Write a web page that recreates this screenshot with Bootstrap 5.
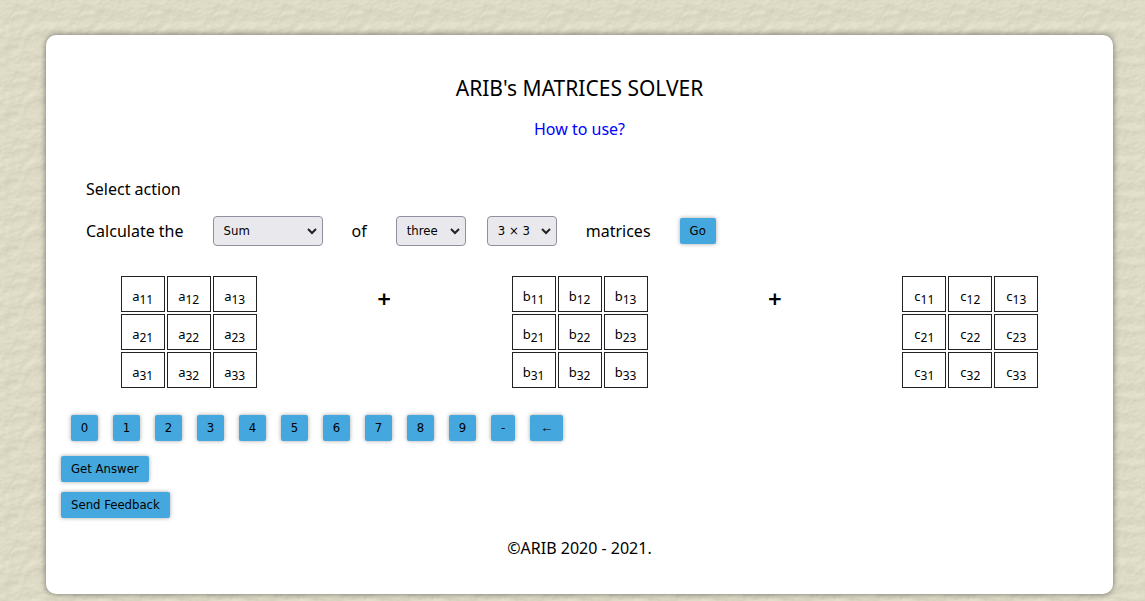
<!DOCTYPE html>
<html lang="en">
<head>
<meta charset="utf-8">
<meta name="viewport" content="width=device-width, initial-scale=1">
<title>ARIB's MATRICES SOLVER</title>
<link href="https://cdn.jsdelivr.net/npm/bootstrap@5.3.0/dist/css/bootstrap.min.css" rel="stylesheet">
<style>
  body {
    color: #000;
    font: 16px/24px "Noto Sans", sans-serif;
    padding: 35px 32px 7px 46px;
    background: #dddac6 url("data:image/svg+xml,%3Csvg xmlns='http://www.w3.org/2000/svg' width='67' height='67'%3E%3Cfilter id='p' x='0' y='0' width='100%25' height='100%25' color-interpolation-filters='sRGB'%3E%3CfeTurbulence type='fractalNoise' baseFrequency='.06 .075' numOctaves='5' seed='8' stitchTiles='stitch'/%3E%3CfeDiffuseLighting surfaceScale='.5' diffuseConstant='1.12' lighting-color='%23dfdcc7'%3E%3CfeDistantLight azimuth='235' elevation='62'/%3E%3C/feDiffuseLighting%3E%3C/filter%3E%3Crect width='67' height='67' filter='url(%23p)'/%3E%3C/svg%3E");
  }
  .panel { background: #fff; border-radius: 10px; box-shadow: 0 0 6px rgba(0,0,0,.5); padding: 40px 15px 34px; }
  h1 { font-size: 21px; line-height: 26px; font-weight: 400; }
  .help { color: #00f; }
  .step { margin: 36px 25px 15px; }
  .picker { height: 30px; padding: 0 8px 0 10px; border: 1px solid #8f8f9d; border-radius: 4px; background: #e9e9ed; color: #000; width: 70px; appearance: none;
    background-image: url("data:image/svg+xml,%3Csvg xmlns='http://www.w3.org/2000/svg' width='10' height='8'%3E%3Cpath d='M1 2l4 4 4-4' fill='none' stroke='%23222' stroke-width='2'/%3E%3C/svg%3E"); background-repeat: no-repeat; background-position: right 5px center; }
  .picker-wide { width: 110px; }
  .picker, .tap { font: 13px/16px "DejaVu Sans Condensed", "DejaVu Sans", sans-serif; }
  .tap { color: #000; background: #44a8de; border: 0; border-radius: 2px; padding: 5px 10px; box-shadow: 0 0 4px rgba(0,0,0,.35); }
  .tap-digit { width: 27px; padding: 5px 0; }
  .tap-arrow { font-family: "Liberation Sans", sans-serif; }
  .controls { gap: 29px; padding: 0 25px; }
  .sizes { gap: 21px; }
  .matrices { padding: 0 30px; margin-top: 28px; }
  .keys { gap: 15px; padding: 0 10px; margin-top: 25px; }
  .actions { gap: 10px; margin-top: 15px; }
  .matrix { border-collapse: separate; border-spacing: 2px; }
  .matrix td { width: 44px; height: 36px; border: 1px solid #222; text-align: center; vertical-align: middle; font-size: 13px; line-height: 20px; padding: 4px 0 0; }
  .matrix sub { font-size: 12px; }
  .plus { font-size: 24px; line-height: 26px; font-weight: 600; padding-top: 12px; }
  footer { margin-top: 18px; }
</style>
</head>
<body>
<main class="panel">
  <header class="text-center">
    <h1 class="mb-3">ARIB's MATRICES SOLVER</h1>
    <a href="#" class="help text-decoration-none">How to use?</a>
  </header>
  <form>
    <p class="step">Select action</p>
    <div class="controls d-flex flex-wrap align-items-center">
      <label for="action">Calculate the</label>
      <select id="action" class="picker picker-wide"><option>Sum</option><option>Difference</option><option>Product</option></select>
      <label for="count">of</label>
      <span class="sizes d-flex"><select id="count" class="picker"><option>three</option><option>two</option></select>
      <select id="size" class="picker"><option>3 × 3</option><option>2 × 2</option></select></span>
      <label for="size">matrices</label>
      <button type="button" class="tap">Go</button>
    </div>
  </form>
  <section class="matrices d-flex">
    <div class="col d-flex justify-content-center"><table class="matrix">
      <tr><td>a<sub>11</sub></td><td>a<sub>12</sub></td><td>a<sub>13</sub></td></tr>
      <tr><td>a<sub>21</sub></td><td>a<sub>22</sub></td><td>a<sub>23</sub></td></tr>
      <tr><td>a<sub>31</sub></td><td>a<sub>32</sub></td><td>a<sub>33</sub></td></tr>
    </table></div>
    <div class="col text-center plus">+</div>
    <div class="col d-flex justify-content-center"><table class="matrix">
      <tr><td>b<sub>11</sub></td><td>b<sub>12</sub></td><td>b<sub>13</sub></td></tr>
      <tr><td>b<sub>21</sub></td><td>b<sub>22</sub></td><td>b<sub>23</sub></td></tr>
      <tr><td>b<sub>31</sub></td><td>b<sub>32</sub></td><td>b<sub>33</sub></td></tr>
    </table></div>
    <div class="col text-center plus">+</div>
    <div class="col d-flex justify-content-center"><table class="matrix">
      <tr><td>c<sub>11</sub></td><td>c<sub>12</sub></td><td>c<sub>13</sub></td></tr>
      <tr><td>c<sub>21</sub></td><td>c<sub>22</sub></td><td>c<sub>23</sub></td></tr>
      <tr><td>c<sub>31</sub></td><td>c<sub>32</sub></td><td>c<sub>33</sub></td></tr>
    </table></div>
  </section>
  <div class="keys d-flex flex-wrap">
    <button type="button" class="tap tap-digit">0</button>
    <button type="button" class="tap tap-digit">1</button>
    <button type="button" class="tap tap-digit">2</button>
    <button type="button" class="tap tap-digit">3</button>
    <button type="button" class="tap tap-digit">4</button>
    <button type="button" class="tap tap-digit">5</button>
    <button type="button" class="tap tap-digit">6</button>
    <button type="button" class="tap tap-digit">7</button>
    <button type="button" class="tap tap-digit">8</button>
    <button type="button" class="tap tap-digit">9</button>
    <button type="button" class="tap">-</button>
    <button type="button" class="tap tap-arrow">←</button>
  </div>
  <div class="actions d-flex flex-column align-items-start">
    <button type="button" class="tap">Get Answer</button>
    <button type="button" class="tap">Send Feedback</button>
  </div>
  <footer class="text-center">©ARIB 2020 - 2021.</footer>
</main>
<script src="https://cdn.jsdelivr.net/npm/bootstrap@5.3.0/dist/js/bootstrap.bundle.min.js"></script>
</body>
</html>
